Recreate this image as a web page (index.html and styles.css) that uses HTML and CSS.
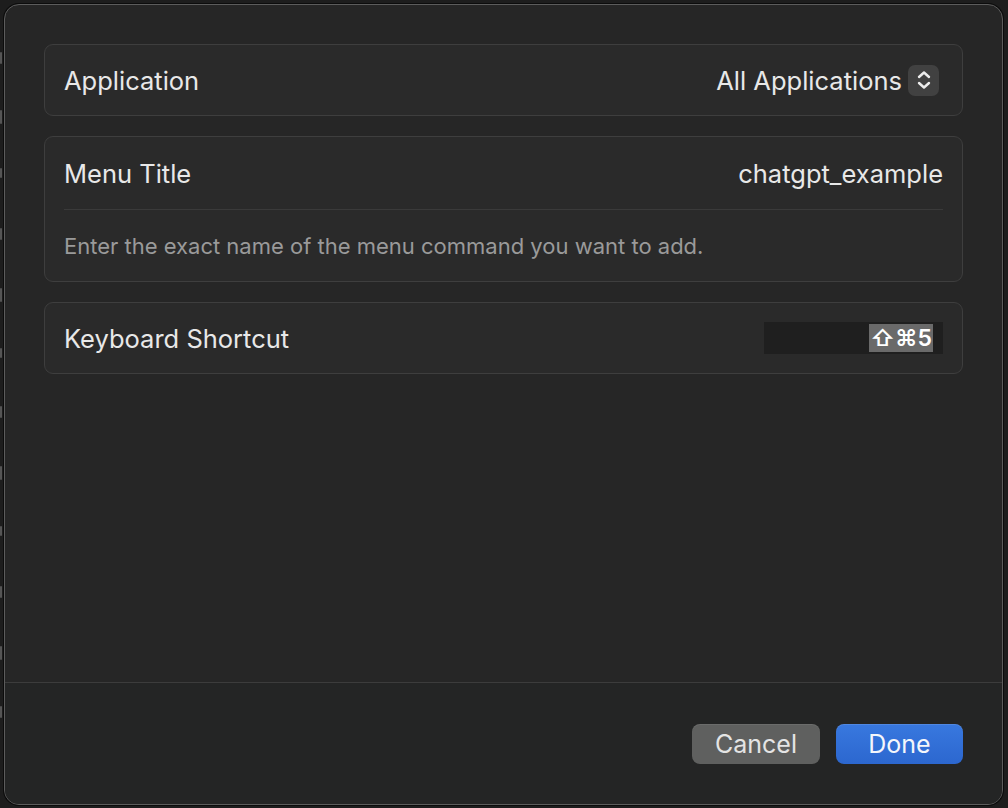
FILE: index.html
```html
<!DOCTYPE html>
<html>
<head>
<meta charset="utf-8">
<link rel="stylesheet" href="styles.css">
</head>
<body>
<div class="behind">
  <i style="top:52px;height:12px"></i>
  <i style="top:110px;height:14px"></i>
  <i style="top:168px;height:10px"></i>
  <i style="top:228px;height:12px"></i>
  <i style="top:288px;height:14px"></i>
  <i style="top:348px;height:10px"></i>
  <i style="top:406px;height:12px"></i>
  <i style="top:466px;height:14px"></i>
  <i style="top:526px;height:10px"></i>
  <i style="top:586px;height:12px"></i>
  <i style="top:646px;height:14px"></i>
  <i style="top:706px;height:12px"></i>
</div>
<div class="sheet">
  <div class="content">
    <div class="card">
      <div class="row">
        <span class="label">Application</span>
        <span class="value">All Applications
          <span class="popup">
            <svg width="20" height="24" viewBox="0 0 20 24"><path d="M5 9 L10 4.5 L15 9 M5 15 L10 19.5 L15 15" fill="none" stroke="#ececec" stroke-width="2.4" stroke-linecap="round" stroke-linejoin="round"/></svg>
          </span>
        </span>
      </div>
    </div>
    <div class="card">
      <div class="row tall">
        <span class="label">Menu Title</span>
        <span class="value">chatgpt_example</span>
      </div>
      <div class="sep"></div>
      <div class="row hint">Enter the exact name of the menu command you want to add.</div>
    </div>
    <div class="card">
      <div class="row">
        <span class="label">Keyboard Shortcut</span>
        <span class="field"><span class="sel">⇧⌘5</span></span>
      </div>
    </div>
  </div>
  <div class="footer">
    <button class="btn cancel">Cancel</button>
    <button class="btn done">Done</button>
  </div>
</div>
</body>
</html>
```

FILE: styles.css
```css
* { box-sizing: border-box; }
html, body { margin: 0; padding: 0; }
body {
  width: 1008px;
  height: 808px;
  background: #1d1d1d;
  font-family: Inter, "Noto Sans", sans-serif;
  color: #e8e8e8;
  overflow: hidden;
  position: relative;
}
.behind {
  position: absolute;
  left: 0;
  top: 0;
  width: 3px;
  height: 808px;
}
.behind i {
  position: absolute;
  left: 0;
  width: 2px;
  background: #555555;
  border-radius: 1px;
}
.sheet {
  position: relative;
  margin: 4px 5px 3px 4px;
  width: 999px;
  height: 801px;
  background: #262626;
  border: 1px solid #5c5c5c;
  border-radius: 15px;
  box-shadow: 0 0 0 1px #0c0c0c;
  display: flex;
  flex-direction: column;
  overflow: hidden;
}
.content {
  flex: 1;
  padding: 39px 39px 0 39px;
  display: flex;
  flex-direction: column;
  gap: 20px;
}
.card {
  background: #2a2a2a;
  border: 1px solid #3e3e3e;
  border-radius: 9px;
  padding: 0 19px 0 19px;
}
.row {
  height: 70px;
  display: flex;
  align-items: center;
  justify-content: space-between;
  font-size: 25.5px;
}
.row.tall { height: 72px; }
.row.hint {
  height: 71px;
  font-size: 22px;
  color: #9a9a9a;
}
.sep { height: 1px; background: #3a3a3a; }
.value { display: flex; align-items: center; }
.popup {
  width: 31px;
  height: 31px;
  margin-left: 6px;
  margin-right: 4px;
  border-radius: 7px;
  background: #414141;
  display: flex;
  align-items: center;
  justify-content: center;
}
.field {
  width: 179px;
  height: 32px;
  background: #1f1f1f;
  display: flex;
  justify-content: flex-end;
  align-items: center;
  padding-right: 10px;
}
.sel {
  background: #6a6a6a;
  color: #ffffff;
  font-size: 23px;
  height: 28px;
  line-height: 28px;
  padding: 0 1px;
  font-weight: 600;
}
.footer {
  height: 122px;
  border-top: 1px solid #3c3c3c;
  background: #242525;
  display: flex;
  justify-content: flex-end;
  align-items: flex-start;
  padding: 41px 39px 0 0;
  gap: 16px;
}
.btn {
  font-family: Inter, "Noto Sans", sans-serif;
  font-size: 25px;
  width: 128px;
  height: 40px;
  border-radius: 8px;
  border: none;
  padding: 0;
}
.cancel {
  background: #5f605f;
  color: #e4e4e4;
  box-shadow: inset 0 1px 0 rgba(255,255,255,0.08);
}
.done {
  width: 127px;
  background: linear-gradient(#3878df, #2c67cf);
  color: #f4f6fb;
  box-shadow: inset 0 1px 0 rgba(255,255,255,0.12);
}
```
